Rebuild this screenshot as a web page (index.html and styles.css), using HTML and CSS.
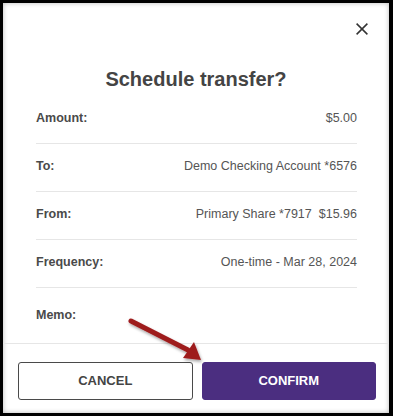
FILE: index.html
```html
<!DOCTYPE html>
<html>
<head>
<meta charset="utf-8">
<link rel="stylesheet" href="styles.css">
</head>
<body>
<div class="frame">
  <div class="dialog">
    <div class="header">
      <div class="close-row">
        <button class="close" aria-label="Close">
          <svg width="12" height="12" viewBox="0 0 12 12"><path d="M0.6 0.6 L11.4 11.4 M11.4 0.6 L0.6 11.4" stroke="#333" stroke-width="1.5" fill="none"/></svg>
        </button>
      </div>
      <h1 class="title">Schedule transfer?</h1>
    </div>
    <div class="rows">
      <div class="row"><span class="label">Amount:</span><span class="value">$5.00</span></div>
      <div class="row"><span class="label">To:</span><span class="value">Demo Checking Account *6576</span></div>
      <div class="row"><span class="label">From:</span><span class="value">Primary Share *7917<span class="bal">$15.96</span></span></div>
      <div class="row"><span class="label">Frequency:</span><span class="value">One-time - Mar 28, 2024</span></div>
      <div class="row memo"><span class="label">Memo:</span><span class="value"></span></div>
    </div>
    <div class="footer">
      <button class="btn cancel">CANCEL</button>
      <button class="btn confirm">CONFIRM</button>
    </div>
    <svg class="arrow" width="90" height="60" viewBox="0 0 90 60">
      <defs>
        <filter id="sh" x="-20%" y="-20%" width="150%" height="150%">
          <feDropShadow dx="1" dy="2" stdDeviation="1.5" flood-color="#000" flood-opacity="0.35"/>
        </filter>
      </defs>
      <g filter="url(#sh)">
        <path d="M7 9 L64 38" stroke="#9e1c1f" stroke-width="5" stroke-linecap="round" fill="none"/>
        <path d="M77 48 L59 46 L70 30 Z" fill="#9e1c1f"/>
      </g>
    </svg>
  </div>
</div>
</body>
</html>
```

FILE: styles.css
```css
* { box-sizing: border-box; }
html, body { margin: 0; padding: 0; }
body {
  background: #000;
  width: 393px;
  height: 416px;
  overflow: hidden;
  font-family: "Liberation Sans", Arial, sans-serif;
}
.frame {
  padding: 3px 4px 3px 3px;
}
.dialog {
  position: relative;
  width: 386px;
  height: 410px;
  background: #fff;
  box-shadow: inset 0 0 5px rgba(0,0,0,0.28);
  display: flex;
  flex-direction: column;
}
.header {
  padding-top: 20px;
  height: 93px;
}
.close-row {
  display: flex;
  justify-content: flex-end;
  padding-right: 21px;
  height: 12px;
}
.close {
  border: 0;
  background: none;
  padding: 0;
  width: 12px;
  height: 12px;
  display: block;
}
.close svg { display: block; }
.title {
  margin: 32px 0 0;
  font-size: 20px;
  line-height: 24px;
  font-weight: bold;
  color: #444;
  text-align: center;
}
.rows {
  padding: 0 32px 0 33px;
}
.row {
  display: flex;
  justify-content: space-between;
  height: 48px;
  padding-top: 15px;
  line-height: 15px;
  font-size: 12.5px;
  border-bottom: 1px solid #e6e6e6;
}
.row.memo {
  height: 55px;
  padding-top: 20px;
  border-bottom: 0;
}
.label {
  font-weight: bold;
  color: #4a4a4a;
}
.value {
  color: #555;
}
.bal { margin-left: 7px; }
.footer {
  border-top: 1px solid #e6e6e6;
  padding: 18px 13px 0 15px;
  display: flex;
  gap: 9px;
}
.btn {
  flex: 1;
  height: 38px;
  border-radius: 3px;
  font-family: "Liberation Sans", Arial, sans-serif;
  font-size: 13px;
  font-weight: bold;
  padding: 0 0 2px;
}
.cancel {
  background: #fff;
  border: 1px solid #4a4a4a;
  color: #444;
}
.confirm {
  background: #4b2e80;
  border: 1px solid #4b2e80;
  color: #fff;
}
.arrow {
  position: absolute;
  left: 121px;
  top: 309px;
  overflow: visible;
}
```
